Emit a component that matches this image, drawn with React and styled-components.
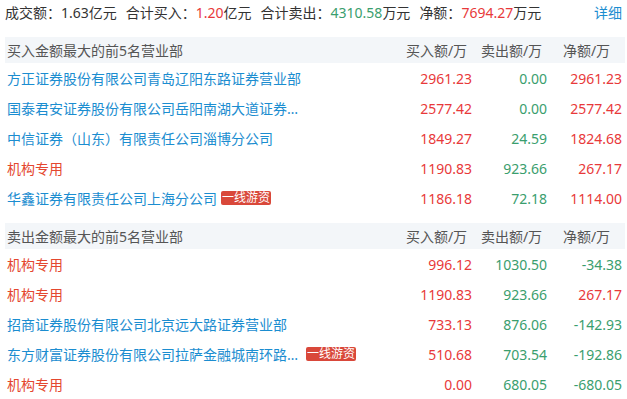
import React from "react";
import styled, { createGlobalStyle } from "styled-components";

const GlobalStyle = createGlobalStyle`
  body {
    margin: 0;
    background: #fff;
    font-family: "Noto Sans", "Noto Sans CJK SC", sans-serif;
    font-size: 14px;
    color: #333;
  }
`;

const RED = "#e8393a";
const GREEN = "#3a9e6e";
const BLUE = "#1b8dd0";
const ORANGE = "#e4472f";

const buyList = [
  { name: "方正证券股份有限公司青岛辽阳东路证券营业部", buy: "2961.23", sell: "0.00", net: "2961.23" },
  { name: "国泰君安证券股份有限公司岳阳南湖大道证券营业部", buy: "2577.42", sell: "0.00", net: "2577.42" },
  { name: "中信证券（山东）有限责任公司淄博分公司", buy: "1849.27", sell: "24.59", net: "1824.68" },
  { name: "机构专用", buy: "1190.83", sell: "923.66", net: "267.17", inst: true },
  { name: "华鑫证券有限责任公司上海分公司", buy: "1186.18", sell: "72.18", net: "1114.00", tag: "一线游资" },
];

const sellList = [
  { name: "机构专用", buy: "996.12", sell: "1030.50", net: "-34.38", inst: true },
  { name: "机构专用", buy: "1190.83", sell: "923.66", net: "267.17", inst: true },
  { name: "招商证券股份有限公司北京远大路证券营业部", buy: "733.13", sell: "876.06", net: "-142.93" },
  { name: "东方财富证券股份有限公司拉萨金融城南环路证券营业部", buy: "510.68", sell: "703.54", net: "-192.86", tag: "一线游资" },
  { name: "机构专用", buy: "0.00", sell: "680.05", net: "-680.05", inst: true },
];

const Section = ({ title, rows }) => (
  <Table>
    <HeadRow>
      <HeadTitle>{title}</HeadTitle>
      <HeadCell>买入额/万</HeadCell>
      <HeadCell>卖出额/万</HeadCell>
      <HeadCell>净额/万</HeadCell>
    </HeadRow>
    {rows.map((r, i) => (
      <Row key={i}>
        <NameCell>
          <Name $inst={r.inst}>{r.name}</Name>
          {r.tag && <Tag>{r.tag}</Tag>}
        </NameCell>
        <Num $color={RED}>{r.buy}</Num>
        <Num $color={GREEN}>{r.sell}</Num>
        <Num $color={r.net.startsWith("-") ? GREEN : RED}>{r.net}</Num>
      </Row>
    ))}
  </Table>
);

const App = () => (
  <>
    <GlobalStyle />
    <Page>
      <Summary>
        <Stat>
          成交额：<Value>1.63</Value>亿元
        </Stat>
        <Stat>
          合计买入：<Value $color={RED}>1.20</Value>亿元
        </Stat>
        <Stat>
          合计卖出：<Value $color={GREEN}>4310.58</Value>万元
        </Stat>
        <Stat>
          净额：<Value $color={RED}>7694.27</Value>万元
        </Stat>
        <Detail>详细</Detail>
      </Summary>
      <Section title="买入金额最大的前5名营业部" rows={buyList} />
      <Section title="卖出金额最大的前5名营业部" rows={sellList} />
    </Page>
  </>
);

const Page = styled.div`
  width: 620px;
  margin-left: 5px;
`;

const Summary = styled.div`
  display: flex;
  align-items: center;
  gap: 9px;
  height: 24px;
  margin-bottom: 13px;
  white-space: nowrap;
`;

const Stat = styled.span`
  color: #333;
`;

const Value = styled.span`
  color: ${(p) => p.$color || "#333"};
`;

const Detail = styled.a`
  margin-left: auto;
  margin-right: 3px;
  color: ${BLUE};
  cursor: pointer;
`;

const Table = styled.div`
  display: flex;
  flex-direction: column;
  & + & {
    margin-top: 10px;
  }
`;

const HeadRow = styled.div`
  display: flex;
  align-items: center;
  height: 26px;
  padding-right: 3px;
  background: #f3f6f9;
  color: #555;
`;

const HeadTitle = styled.div`
  flex: 1;
  padding-left: 2px;
`;

const HeadCell = styled.div`
  width: 75px;
  padding-left: 4px;
  box-sizing: border-box;
  text-align: center;
`;

const Row = styled.div`
  display: flex;
  align-items: center;
  height: 30px;
  padding-right: 3px;
`;

const NameCell = styled.div`
  flex: 1;
  min-width: 0;
  display: flex;
  align-items: center;
  padding-left: 2px;
`;

const Name = styled.span`
  max-width: 295px;
  overflow: hidden;
  white-space: nowrap;
  text-overflow: ellipsis;
  color: ${(p) => (p.$inst ? ORANGE : BLUE)};
`;

const Tag = styled.span`
  margin-left: 4px;
  padding: 0 1px;
  height: 14px;
  line-height: 14px;
  font-size: 12px;
  color: #fff;
  background: #d9483a;
  border-radius: 2px;
  white-space: nowrap;
`;

const Num = styled.div`
  width: 75px;
  text-align: right;
  color: ${(p) => p.$color};
`;

export default App;
